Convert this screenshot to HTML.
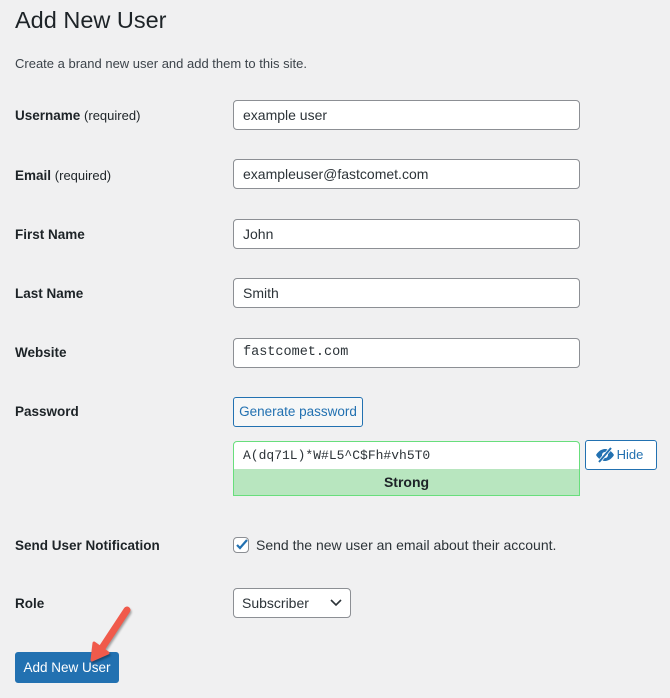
<!DOCTYPE html>
<html><head><meta charset="utf-8"><style>
*{box-sizing:border-box;margin:0;padding:0}
body{width:670px;height:698px;background:#f0f0f1;font-family:"Liberation Sans",sans-serif;color:#1d2327;position:relative;overflow:hidden}
.a{position:absolute}
h1{position:absolute;left:15px;top:7px;font-size:23.5px;font-weight:400;color:#1d2327}
.sub{left:15px;top:56px;font-size:13px;color:#3c434a}
.lbl{left:15px;font-size:13.5px;font-weight:bold;color:#1d2327}
.lbl span{font-weight:normal;font-size:13px}
.inp{left:233px;width:347px;height:30px;background:#fff;border:1px solid #8c8f94;border-radius:4px;padding:0 9px;font-size:14px;line-height:28px;color:#2c3338}
.mono{font-family:"Liberation Mono",monospace;font-size:13.5px}
.btn2{border:1px solid #2271b1;color:#2271b1;background:#f6f7f7;border-radius:3px;font-size:13px;text-align:center}
</style></head><body>
<h1>Add New User</h1>
<div class="a sub">Create a brand new user and add them to this site.</div>

<div class="a lbl" style="top:108px">Username <span>(required)</span></div>
<div class="a inp" style="top:100px">example user</div>
<div class="a lbl" style="top:168px">Email <span>(required)</span></div>
<div class="a inp" style="top:159px">exampleuser@fastcomet.com</div>
<div class="a lbl" style="top:227px">First Name</div>
<div class="a inp" style="top:219px">John</div>
<div class="a lbl" style="top:286px">Last Name</div>
<div class="a inp" style="top:278px">Smith</div>
<div class="a lbl" style="top:345px">Website</div>
<div class="a inp mono" style="top:338px">fastcomet.com</div>
<div class="a lbl" style="top:404px">Password</div>
<div class="a btn2" style="left:233px;top:397px;width:130px;height:30px;line-height:28px;font-size:13.5px">Generate password</div>
<div class="a inp mono" style="top:441px;height:29px;border-color:#68de7c;border-radius:4px 4px 0 0;line-height:27px;font-size:13px">A(dq71L)*W#L5^C$Fh#vh5T0</div>
<div class="a" style="left:233px;top:469px;width:347px;height:27px;background:#b8e6bf;border:1px solid #68de7c;border-top:none;text-align:center;font-size:14px;font-weight:bold;line-height:26px;color:#1d2327">Strong</div>
<div class="a btn2" style="left:585px;top:440px;width:72px;height:30px;line-height:28px;background:#fff;padding-left:18px">Hide
<svg class="a" style="left:9px;top:6px" width="20" height="16" viewBox="0 0 20 16"><path d="M1 8C4 3 8 2 10 2s6 1 9 6c-3 5-7 6-9 6S4 13 1 8z" fill="#2271b1"/><circle cx="10" cy="8" r="3" fill="#fff"/><path d="M4 15L16 1" stroke="#fff" stroke-width="3.5"/><path d="M4 15L16 1" stroke="#2271b1" stroke-width="2"/></svg></div>

<div class="a lbl" style="top:538px">Send User Notification</div>
<div class="a" style="left:233px;top:537px;width:16px;height:16px;background:#fff;border:1px solid #8c8f94;border-radius:4px">
<svg class="a" style="left:0;top:-1px" width="16" height="16" viewBox="0 0 16 16"><path d="M3 8l3 3 7-8" stroke="#2271b1" stroke-width="2.2" fill="none"/></svg></div>
<div class="a" style="left:256px;top:537px;font-size:14px;color:#2c3338">Send the new user an email about their account.</div>

<div class="a lbl" style="top:596px">Role</div>
<div class="a inp" style="top:588px;width:118px;padding-left:8px">Subscriber
<svg class="a" style="left:96px;top:10px" width="12" height="8" viewBox="0 0 12 8"><path d="M1 1l5 5 5-5" stroke="#2c3338" stroke-width="1.6" fill="none"/></svg></div>

<div class="a" style="left:15px;top:652px;width:104px;height:31px;background:#2271b1;border:1px solid #2271b1;border-radius:3px;color:#fff;font-size:13.5px;text-align:center;line-height:29px">Add New User</div>

<svg class="a" style="left:80px;top:600px;filter:drop-shadow(1px 2px 1px rgba(0,0,0,.35))" width="60" height="75" viewBox="0 0 60 75">
<path d="M47 10L22 48" stroke="#f05a4b" stroke-width="7" stroke-linecap="round"/>
<path d="M12 60L14 43L28 53z" fill="#f05a4b" stroke="#f05a4b" stroke-width="3" stroke-linejoin="round"/>
</svg>
</body></html>
